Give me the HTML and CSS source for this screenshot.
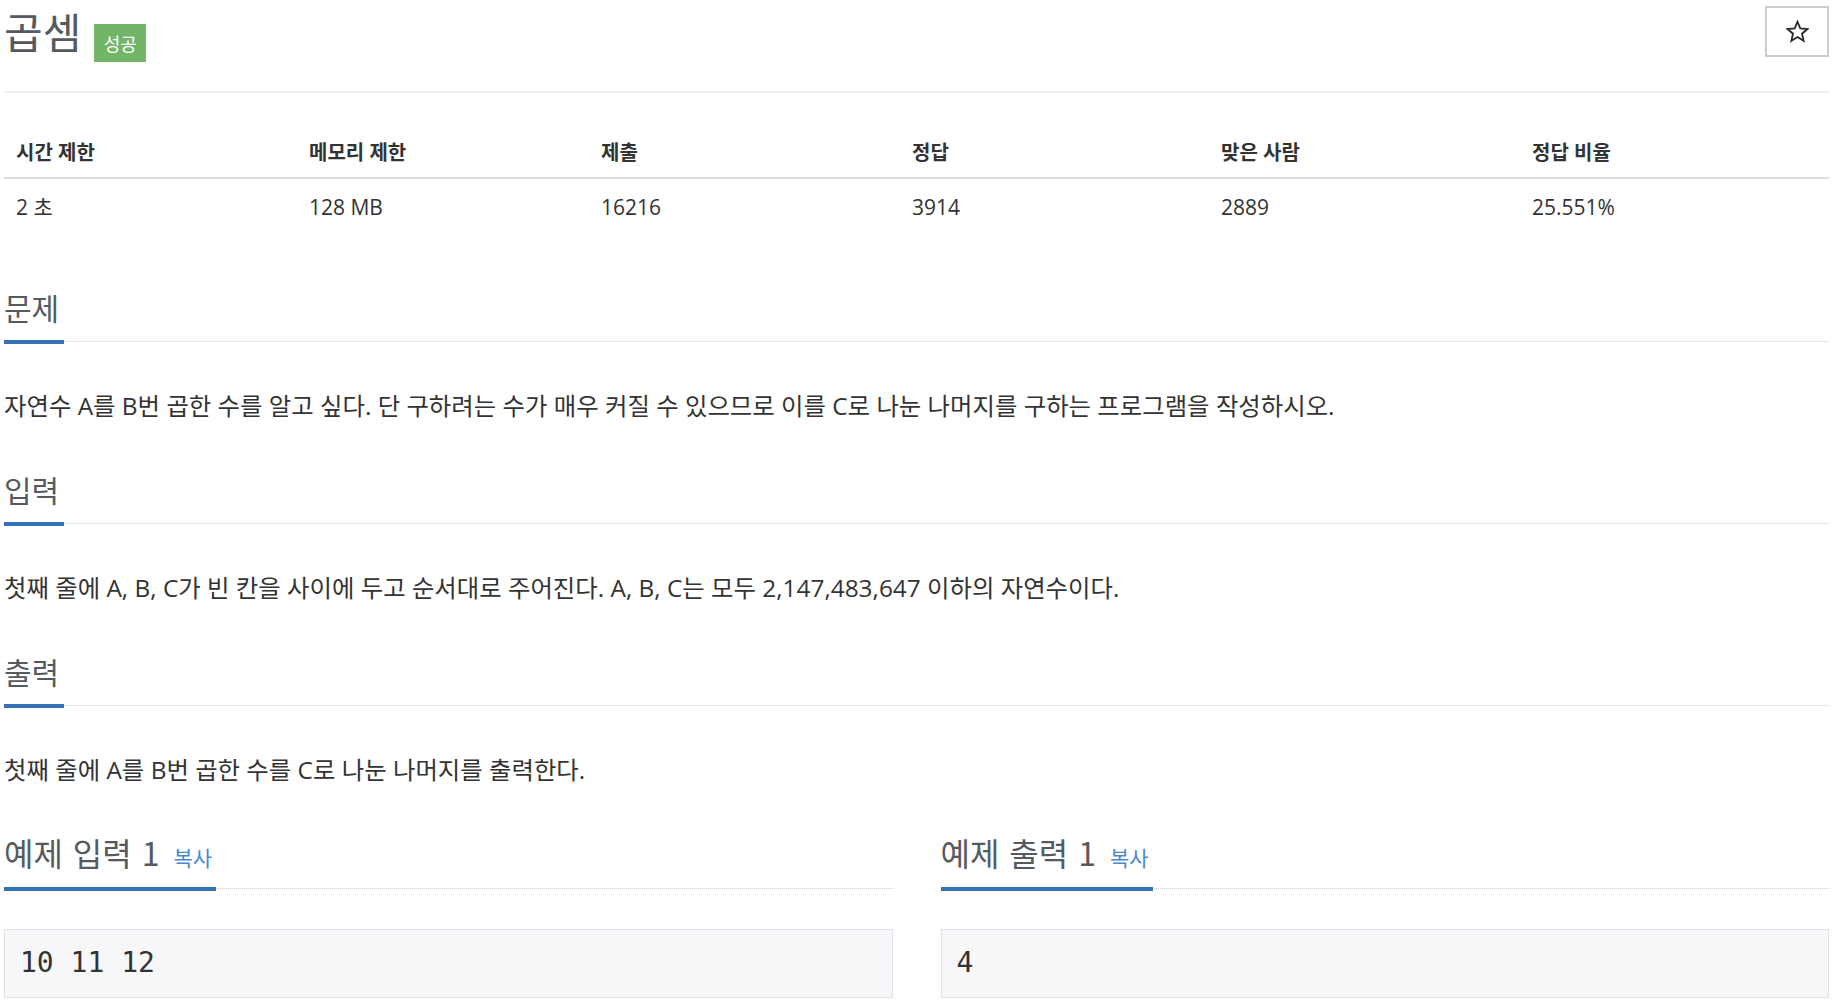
FILE: index.html
```html
<!DOCTYPE html>
<html lang="ko">
<head>
<meta charset="utf-8">
<title>곱셈</title>
<link rel="stylesheet" href="styles.css">
</head>
<body>
<div class="wrap">
  <div class="page-header">
    <div class="title-group">
      <h1 class="title">곱셈</h1>
      <span class="badge">성공</span>
    </div>
    <button class="star-btn" type="button" aria-label="즐겨찾기">
      <svg class="star-icon" viewBox="0 0 24 24" width="23" height="23">
        <polygon points="12,1.8 14.9,8.8 22.4,9.4 16.7,14.3 18.4,21.7 12,17.8 5.6,21.7 7.3,14.3 1.6,9.4 9.1,8.8" fill="none" stroke="#2a2a2a" stroke-width="1.9" stroke-linejoin="miter"/>
      </svg>
    </button>
  </div>

  <table class="info">
    <colgroup>
      <col class="c1"><col class="c2"><col class="c3"><col class="c4"><col class="c5"><col class="c6">
    </colgroup>
    <thead>
      <tr><th>시간 제한</th><th>메모리 제한</th><th>제출</th><th>정답</th><th>맞은 사람</th><th>정답 비율</th></tr>
    </thead>
    <tbody>
      <tr><td>2 초</td><td>128 MB</td><td>16216</td><td>3914</td><td>2889</td><td>25.551%</td></tr>
    </tbody>
  </table>

  <section class="section first">
    <div class="headline"><h2>문제</h2></div>
    <p class="desc">자연수 A를 B번 곱한 수를 알고 싶다. 단 구하려는 수가 매우 커질 수 있으므로 이를 C로 나눈 나머지를 구하는 프로그램을 작성하시오.</p>
  </section>

  <section class="section">
    <div class="headline"><h2>입력</h2></div>
    <p class="desc">첫째 줄에 A, B, C가 빈 칸을 사이에 두고 순서대로 주어진다. A, B, C는 모두 2,147,483,647 이하의 자연수이다.</p>
  </section>

  <section class="section">
    <div class="headline"><h2>출력</h2></div>
    <p class="desc">첫째 줄에 A를 B번 곱한 수를 C로 나눈 나머지를 출력한다.</p>
  </section>

  <div class="samples">
    <section class="sample">
      <div class="headline"><h2>예제 입력 1 <a class="copy" href="#">복사</a></h2></div>
      <pre class="sampledata">10 11 12</pre>
    </section>
    <section class="sample">
      <div class="headline"><h2>예제 출력 1 <a class="copy" href="#">복사</a></h2></div>
      <pre class="sampledata">4</pre>
    </section>
  </div>
</div>
</body>
</html>
```

FILE: styles.css
```css
html, body {
  margin: 0;
  padding: 0;
  background: #fff;
}

body {
  font-family: "Open Sans", "Noto Sans CJK KR", sans-serif;
  color: #333;
}

.wrap {
  padding: 0 9px 0 4px;
}

.page-header {
  display: flex;
  justify-content: space-between;
  align-items: flex-start;
  height: 91px;
  border-bottom: 2px solid #eee;
}

.title-group {
  display: flex;
  align-items: flex-start;
}

.title {
  margin: 10px 0 0 0;
  font-size: 42px;
  line-height: 42px;
  font-weight: 400;
  color: #555a61;
  font-family: "Noto Sans CJK KR", sans-serif;
}

.badge {
  display: flex;
  align-items: center;
  justify-content: center;
  width: 52px;
  height: 38px;
  margin: 24px 0 0 13px;
  background: #72b566;
  color: #fff;
  font-size: 18px;
  font-family: "Noto Sans CJK KR", sans-serif;
}

.star-btn {
  display: flex;
  align-items: center;
  justify-content: center;
  width: 64px;
  height: 51px;
  margin-top: 6px;
  border: 2px solid #ccc;
  background: #fff;
  padding: 0;
}

.star-icon {
  display: block;
}

.info {
  width: 100%;
  border-collapse: collapse;
  margin-top: 32px;
  table-layout: fixed;
}

.info .c1 { width: 295px; }
.info .c2 { width: 292px; }
.info .c3 { width: 311px; }
.info .c4 { width: 309px; }
.info .c5 { width: 311px; }
.info .c6 { width: auto; }

.info th {
  text-align: left;
  font-weight: 700;
  font-size: 20px;
  line-height: 26px;
  padding: 15px 10px 11px;
  border-bottom: 2px solid #ddd;
  color: #333;
}

.info td {
  font-size: 21px;
  line-height: 26px;
  padding: 15px 10px 14px;
  color: #333;
}

.info th:first-child,
.info td:first-child {
  padding-left: 12px;
}

.section {
  margin-top: 50px;
}

.section.first {
  margin-top: 56px;
}

.headline {
  border-bottom: 1px dotted #d0d0d0;
}

.headline h2 {
  display: inline-block;
  margin: 0 0 -3px 0;
  padding: 0 5px 16px 0;
  font-size: 30px;
  line-height: 34px;
  font-weight: 400;
  color: #555a61;
  border-bottom: 4px solid #3273b8;
  font-family: "Noto Sans CJK KR", sans-serif;
}

.desc {
  margin: 48px 0 0 0;
  font-size: 24.4px;
  line-height: 32px;
  color: #333;
}

.samples {
  display: grid;
  grid-template-columns: 1fr 1fr;
  column-gap: 48px;
  margin-top: 46px;
}

.sample .headline h2 {
  font-size: 32px;
  padding: 3px 4px 13px 0;
  word-spacing: 1px;
}

.copy {
  font-size: 21px;
  color: #4a88cf;
  text-decoration: none;
  margin-left: 4px;
  word-spacing: 0;
}

.sampledata {
  margin: 40px 0 0 0;
  padding: 15px 15px 16px;
  background: #f7f7f9;
  border: 1px solid #e1e1e8;
  font-family: "DejaVu Sans Mono", monospace;
  font-size: 28px;
  line-height: 36px;
  color: #333;
}
```
